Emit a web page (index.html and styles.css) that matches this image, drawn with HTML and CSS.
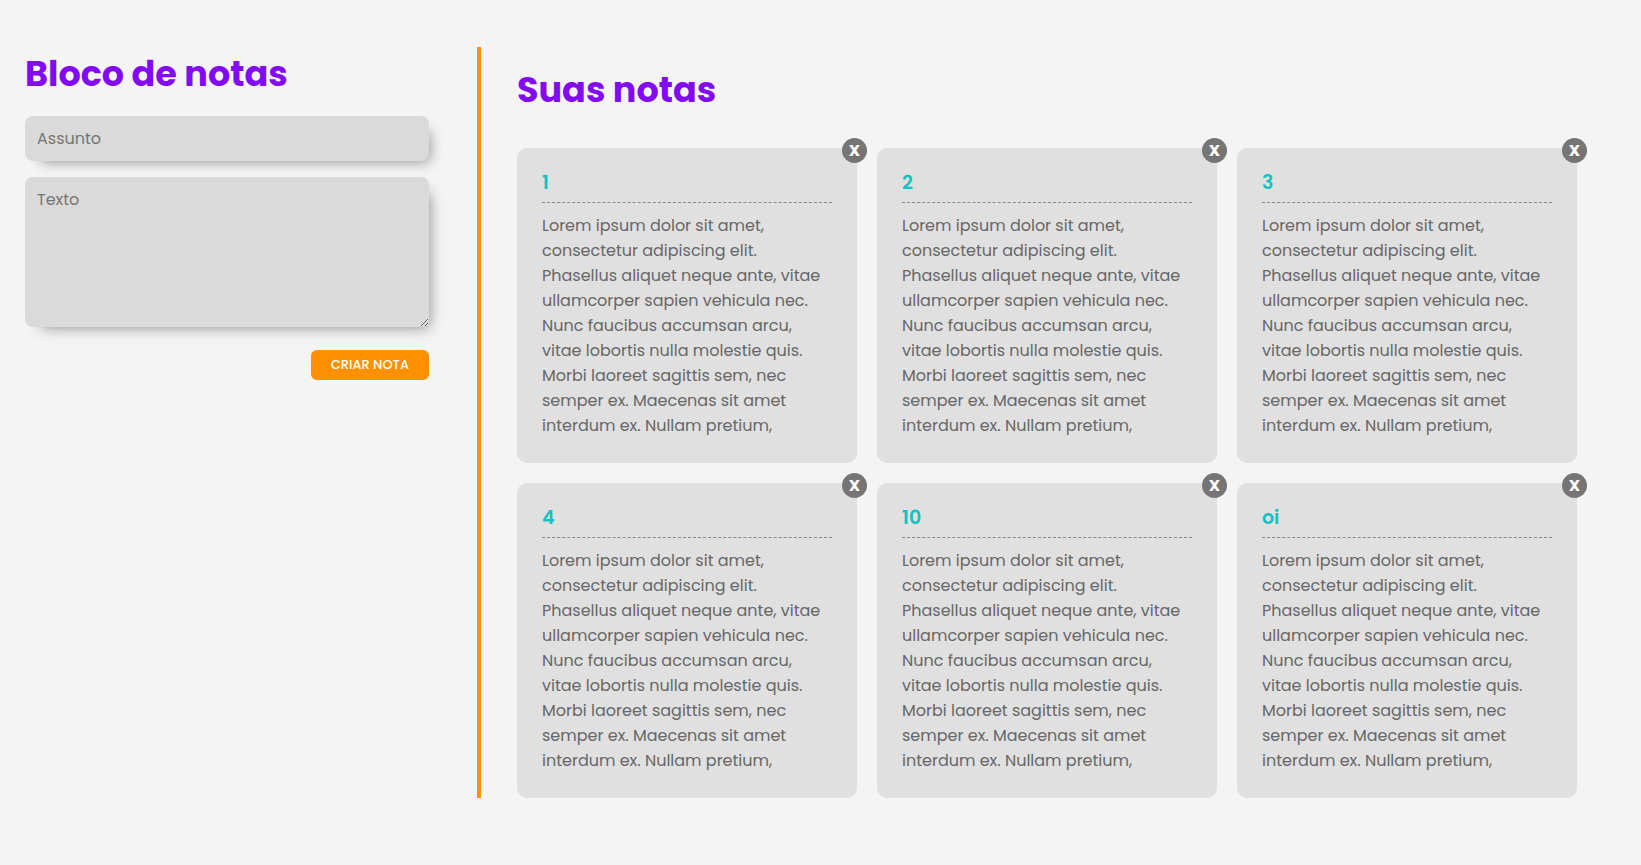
FILE: index.html
```html
<!DOCTYPE html>
<html lang="pt-BR">
<head>
<meta charset="UTF-8">
<meta name="viewport" content="width=device-width, initial-scale=1">
<title>Bloco de notas</title>
<link rel="stylesheet" href="styles.css">
</head>
<body>
<main class="app">
  <form class="editor">
    <h1 class="heading">Bloco de notas</h1>
    <input class="field" type="text" placeholder="Assunto" aria-label="Assunto">
    <textarea class="field field-text" placeholder="Texto" aria-label="Texto"></textarea>
    <button class="create" type="button">CRIAR NOTA</button>
  </form>
  <section class="notes">
    <h2 class="heading">Suas notas</h2>
    <div class="grid" id="grid"></div>
  </section>
</main>
<script src="script.js"></script>
</body>
</html>
```
FILE: styles.css
```css
* {
  box-sizing: border-box;
  margin: 0;
  padding: 0;
}

body {
  background: #f4f4f4;
  color: #676767;
  font-family: Poppins, Inter, sans-serif;
  font-size: 16px;
  line-height: 25px;
}

.app {
  display: grid;
  grid-template-columns: minmax(300px, 456px) 1fr;
  padding: 47px 64px 47px 25px;
}

.editor {
  display: flex;
  flex-direction: column;
  gap: 16px;
  padding-right: 48px;
  border-right: 4px solid #ff9100;
  padding-bottom: 16px;
}

.heading {
  color: #820af5;
  font-size: 35px;
  font-weight: 700;
  line-height: 53px;
}

.field {
  display: block;
  width: 100%;
  height: 45px;
  padding: 10px 12px;
  border: 0;
  border-radius: 8px;
  background: #dadada;
  color: inherit;
  font: inherit;
  box-shadow: 8px 8px 14px -8px rgba(0, 0, 0, 0.45);
}

.editor .field {
  flex: none;
}

.field::placeholder {
  color: #757575;
}

.field-text {
  height: 150px;
}

.create {
  align-self: flex-end;
  height: 30px;
  margin-top: 7px;
  padding: 0 20px;
  border: 0;
  border-radius: 6px;
  background: #ff9100;
  color: #fff;
  font-family: inherit;
  font-size: 13px;
  font-weight: 500;
  cursor: pointer;
}

.notes {
  display: flex;
  flex-direction: column;
  gap: 32px;
  padding: 16px 0 0 36px;
}

.grid {
  display: grid;
  grid-template-columns: repeat(auto-fill, minmax(300px, 1fr));
  gap: 20px;
}

.note {
  position: relative;
  padding: 25px;
  border-radius: 10px;
  background: #e0e0e0;
}

.note-title {
  margin-bottom: 10px;
  padding-bottom: 10px;
  border-bottom: 1px dashed #8a8a8a;
  color: #10c2c2;
  font-size: 19px;
  font-weight: 600;
  line-height: 19px;
}

.remove {
  position: absolute;
  top: -10px;
  right: -10px;
  width: 25px;
  height: 25px;
  border: 0;
  border-radius: 50%;
  background: #757575;
  color: #fff;
  font-family: inherit;
  font-size: 16px;
  font-weight: 700;
  line-height: 25px;
  cursor: pointer;
}
```
FILE: script.js
```js
const text = "Lorem ipsum dolor sit amet, consectetur adipiscing elit. Phasellus aliquet neque ante, vitae ullamcorper sapien vehicula nec. Nunc faucibus accumsan arcu, vitae lobortis nulla molestie quis. Morbi laoreet sagittis sem, nec semper ex. Maecenas sit amet interdum ex. Nullam pretium,";
const grid = document.getElementById("grid");

for (const title of ["1", "2", "3", "4", "10", "oi"]) {
  const note = document.createElement("article");
  note.className = "note";
  note.innerHTML = `
    <button class="remove" type="button" aria-label="Excluir nota ${title}">X</button>
    <h3 class="note-title">${title}</h3>
    <p>${text}</p>`;
  grid.append(note);
}
```
